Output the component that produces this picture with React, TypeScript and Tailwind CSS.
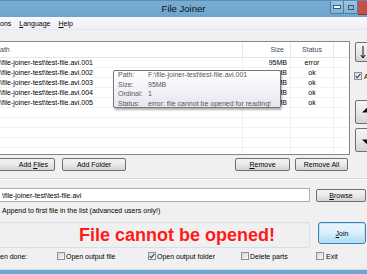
import React from "react";

const Check = ({ checked }: { checked?: boolean }) => (
  <span className="w-[8px] h-[8px] border border-[#8e8f8f] bg-linear-to-br from-[#d8d8d8] to-[#fafafa] flex items-center justify-center shrink-0">
    {checked && (
      <svg width="6" height="6" viewBox="0 0 6 6">
        <path d="M0.7 3.1 L2.3 4.9 L5.4 0.8" stroke="#34499a" strokeWidth="1.2" fill="none" />
      </svg>
    )}
  </span>
);

const Btn = ({ children, className }: { children?: React.ReactNode; className?: string }) => (
  <div
    className={
      "flex items-center justify-center border border-[#707070] rounded-[2px] bg-linear-to-b from-[#f4f4f4] via-[#e9e9e9] to-[#d3d3d3] text-black shrink-0 " +
      (className || "")
    }
  >
    {children}
  </div>
);

const rows = [
  { p: "\\file-joiner-test\\test-file.avi.001", s: "95MB", st: "error" },
  { p: "\\file-joiner-test\\test-file.avi.002", s: "95MB", st: "ok" },
  { p: "\\file-joiner-test\\test-file.avi.003", s: "95MB", st: "ok" },
  { p: "\\file-joiner-test\\test-file.avi.004", s: "95MB", st: "ok" },
  { p: "\\file-joiner-test\\test-file.avi.005", s: "95MB", st: "ok" },
  { p: "", s: "", st: "" },
  { p: "", s: "", st: "" },
  { p: "", s: "", st: "" },
  { p: "", s: "", st: "" },
  { p: "", s: "", st: "" },
];

export default function App() {
  return (
    <div className="relative w-[367px] h-[274px] overflow-hidden bg-[#f0f0f0] flex flex-col font-['Liberation_Sans',Arial,sans-serif] text-[7px] leading-none text-black">
      {/* Title bar */}
      <div className="h-[17px] shrink-0 flex bg-linear-to-b from-[#78acd3] to-[#6ea4cc] border-t border-[#5b8db5]">
        <div className="w-[37px] shrink-0" />
        <div className="flex-1 flex items-center justify-center text-[9.5px] text-[#111]">File Joiner</div>
        <div className="w-[37px] shrink-0 flex items-start">
          <div className="w-[14px] h-[13px] border border-t-0 border-[#4d7ea4] bg-linear-to-b from-[#9cc4e2] to-[#80b2d8] rounded-bl-[2px] flex items-center justify-center">
            <span className="w-[6px] h-[2px] bg-white border border-[#3a5a76] box-content" />
          </div>
          <div className="w-[14px] h-[13px] border border-t-0 border-l-0 border-[#4d7ea4] bg-linear-to-b from-[#9cc4e2] to-[#80b2d8] flex items-center justify-center">
            <span className="w-[6px] h-[5px] border border-[#3a5a76] bg-transparent" />
          </div>
          <div className="flex-1 h-[14px] bg-[#c84f47] border-b border-[#8c2f2a]" />
        </div>
      </div>

      {/* Menu bar */}
      <div className="h-[13px] shrink-0 flex items-center gap-[8px] bg-linear-to-b from-[#f8f9fc] to-[#eef0f7] border-b border-[#e4e7ef]">
        <span>ons</span>
        <span>
          <span className="underline">L</span>anguage
        </span>
        <span>
          <span className="underline">H</span>elp
        </span>
      </div>

      <div className="h-[11px] shrink-0" />

      {/* Main list area */}
      <div className="h-[114px] shrink-0 flex">
        <div className="w-[350px] shrink-0 bg-white border-t border-r border-b border-[#828790] overflow-hidden flex flex-col">
          <div className="h-[16px] shrink-0 flex border-b border-[#e5e5e5] text-[#3d4a5c]">
            <div className="w-[242px] flex items-center">ath</div>
            <div className="w-[48px] flex items-center justify-end pr-[6px] border-l border-[#e5e5e5]">Size</div>
            <div className="w-[43px] flex items-center justify-center border-l border-[#e5e5e5]">Status</div>
            <div className="flex-1 border-l border-[#e5e5e5]" />
          </div>
          {rows.map((r, i) => (
            <div key={i} className="h-[10px] shrink-0 flex border-b border-[#f2f2f2]">
              <div className="w-[242px] flex items-center whitespace-nowrap">{r.p}</div>
              <div className="w-[48px] flex items-center justify-end pr-[3px] border-l border-[#f0f0f0]">{r.s}</div>
              <div className="w-[43px] flex items-center justify-center border-l border-[#f0f0f0]">{r.st}</div>
              <div className="flex-1 border-l border-[#f0f0f0]" />
            </div>
          ))}
        </div>
        <div className="flex-1 flex flex-col">
          <Btn className="mt-[1px] ml-[5px] w-[30px] h-[20px] justify-start! pl-[4px]">
            <svg width="6" height="14" viewBox="0 0 6 14">
              <path d="M3 1 V12.5" stroke="#111" strokeWidth="1" />
              <path d="M0.8 10 L3 13 L5.2 10" stroke="#111" strokeWidth="1" fill="none" />
            </svg>
          </Btn>
          <div className="mt-[10px] ml-[4px] flex items-center gap-[2px]">
            <Check checked />
            <span>A</span>
          </div>
          <Btn className="mt-[20px] ml-[5px] w-[30px] h-[24px] justify-start! pl-[6px]">
            <svg width="18" height="16" viewBox="0 0 18 16">
              <path d="M0 8.5 L9 0 L18 8.5 L13 8.5 L13 16 L5 16 L5 8.5 Z" fill="#0a0a0a" />
            </svg>
          </Btn>
          <Btn className="mt-[4px] ml-[5px] w-[30px] h-[24px] justify-start! pl-[6px]">
            <svg width="18" height="16" viewBox="0 0 18 16">
              <path d="M0 7.5 L9 16 L18 7.5 L13 7.5 L13 0 L5 0 L5 7.5 Z" fill="#0a0a0a" />
            </svg>
          </Btn>
        </div>
      </div>

      {/* Add / remove buttons */}
      <div className="h-[13px] mt-[3px] shrink-0 flex">
        <Btn className="w-[64px] h-[13px] ml-[-9px] justify-end! pr-[6px]">
          Add <span className="underline ml-[2px]">F</span>iles
        </Btn>
        <Btn className="w-[64px] h-[13px] ml-[7px]">Add Folder</Btn>
        <Btn className="w-[55px] h-[13px] ml-[109px]">
          <span className="underline">R</span>emove
        </Btn>
        <Btn className="w-[53px] h-[13px] ml-[5px]">Remove All</Btn>
      </div>

      {/* separator */}
      <div className="mt-[7px] h-px shrink-0 bg-[#d8d8d8]" />
      <div className="h-px shrink-0 bg-white" />

      {/* path row */}
      <div className="mt-[8px] h-[14px] shrink-0 flex items-center">
        <div className="w-[310px] h-[14px] bg-white border border-[#abadb3] border-l-0 flex items-center pl-[2px]">
          {"\\file-joiner-test\\test-file.avi"}
        </div>
        <Btn className="w-[50px] h-[13px] ml-[6px]">
          <span className="underline">B</span>rowse
        </Btn>
      </div>

      {/* append row */}
      <div className="mt-[4px] h-[8px] shrink-0 flex items-center pl-[2px]">
        Append to first file in the list (advanced users only!)
      </div>

      {/* status + join */}
      <div className="mt-[8px] h-[26px] shrink-0 flex">
        <div className="w-[310px] h-[26px] border border-l-0 border-[#d5dfe5] rounded-r-[3px] flex items-center pl-[79px]">
          <span className="text-[18px] font-bold text-[#ff1a1a] whitespace-nowrap">File cannot be opened!</span>
        </div>
        <div className="ml-[8px] w-[48px] h-[22px] border border-[#3c7fb1] rounded-[3px] bg-linear-to-b from-[#eaf6fd] via-[#d9f0fc] to-[#a9daf5] flex items-center justify-center shadow-[inset_0_0_0_1px_#bfe4f9]">
          <span className="underline">J</span>oin
        </div>
      </div>

      {/* bottom options */}
      <div className="mt-[4px] h-[8px] shrink-0 flex items-center">
        <div className="w-[57px] shrink-0">en done:</div>
        <div className="w-[91px] shrink-0 flex items-center gap-[1px]">
          <Check />
          <span>Open output file</span>
        </div>
        <div className="w-[93px] shrink-0 flex items-center gap-[1px]">
          <Check checked />
          <span>Open output folder</span>
        </div>
        <div className="w-[75px] shrink-0 flex items-center gap-[1px]">
          <Check />
          <span>Delete parts</span>
        </div>
        <div className="flex items-center gap-[2px]">
          <Check />
          <span>Exit</span>
        </div>
      </div>

      <div className="flex-1" />
      <div className="h-px shrink-0 bg-[#d0d8e0]" />
      <div className="h-[4px] shrink-0 bg-[#6ea6d0]" />

      {/* tooltip */}
      <div className="absolute left-[113px] top-[70px] w-[168px] h-[38px] border border-[#767676] rounded-[2px] bg-linear-to-b from-white to-[#e6e7f0] shadow-[1px_2px_2px_rgba(0,0,0,0.3)] text-[#575757] flex flex-col justify-center gap-[2.5px] pl-[4px]">
        <div className="flex"><span className="w-[30px]">Path:</span><span>F:\file-joiner-test\test-file.avi.001</span></div>
        <div className="flex"><span className="w-[30px]">Size:</span><span>95MB</span></div>
        <div className="flex"><span className="w-[30px]">Ordinal:</span><span>1</span></div>
        <div className="flex"><span className="w-[30px]">Status:</span><span>error: file cannot be opened for reading!</span></div>
      </div>
    </div>
  );
}
